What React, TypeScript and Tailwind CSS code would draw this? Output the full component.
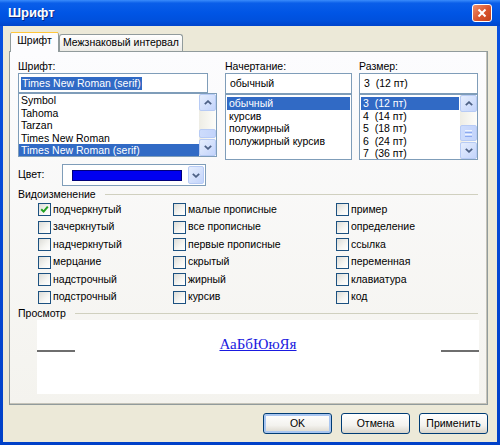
import React from 'react';

type Dir = 'up' | 'down';

const Chevron: React.FC<{ dir: Dir }> = ({ dir }) => (
  <svg width="8" height="5" viewBox="0 0 8 5">
    <path
      d={dir === 'up' ? 'M0.8 4.2 L4 1.2 L7.2 4.2' : 'M0.8 0.8 L4 3.8 L7.2 0.8'}
      stroke="#4d6185"
      strokeWidth="1.8"
      fill="none"
    />
  </svg>
);

const ScrollBtn: React.FC<{ dir: Dir }> = ({ dir }) => (
  <div className="h-[17px] w-[17px] shrink-0 rounded-[2px] border border-[#b7cbf5] bg-[linear-gradient(135deg,#e6eefd,#c3d4fb)] flex items-center justify-center">
    <Chevron dir={dir} />
  </div>
);

const Scrollbar: React.FC<{ thumb: number }> = ({ thumb }) => (
  <div className="w-[17px] flex flex-col bg-[linear-gradient(90deg,#eeede5,#fdfdfa)]">
    <ScrollBtn dir="up" />
    <div className="flex-1 flex flex-col justify-end pb-[1px]">
      <div
        className="w-[17px] rounded-[2px] border border-[#b7cbf5] bg-[linear-gradient(90deg,#cddcfc,#c3d4fb)] flex flex-col items-center justify-center gap-[1px]"
        style={{ height: thumb }}
      >
        {thumb > 12 && (
          <>
            <div className="w-[7px] h-px bg-[#eef4fe]" />
            <div className="w-[7px] h-px bg-[#8caaf0]" />
            <div className="w-[7px] h-px bg-[#eef4fe]" />
            <div className="w-[7px] h-px bg-[#8caaf0]" />
          </>
        )}
      </div>
    </div>
    <ScrollBtn dir="down" />
  </div>
);

const Item: React.FC<{ text: string; sel?: boolean }> = ({ text, sel }) => (
  <div
    className={`h-[12.5px] leading-[12.5px] pl-[2px] whitespace-pre ${
      sel ? 'bg-[#316ac5] text-white' : ''
    }`}
  >
    {text}
  </div>
);

const Check: React.FC<{ label: string; checked?: boolean }> = ({ label, checked }) => (
  <div className="h-[17.5px] flex items-center gap-[2px]">
    <span className="w-[13px] h-[13px] shrink-0 border border-[#1c5180] bg-[linear-gradient(135deg,#dcdcd7,#f6f6f3_60%,#ffffff)] flex items-center justify-center">
      {checked && (
        <svg width="9" height="9" viewBox="0 0 9 9">
          <path d="M1.2 4.2 L3.6 6.6 L7.8 1.6" stroke="#21a121" strokeWidth="2" fill="none" />
        </svg>
      )}
    </span>
    <span className="whitespace-nowrap">{label}</span>
  </div>
);

const XpButton: React.FC<{ text: string; def?: boolean }> = ({ text, def }) => (
  <div
    className={`w-[69px] h-[21px] rounded-[3px] border border-[#003c74] bg-[linear-gradient(180deg,#ffffff,#f3f2ee_60%,#d9d5cb)] flex items-center justify-center ${
      def ? 'shadow-[inset_0_0_0_2px_#a9c6f1]' : ''
    }`}
  >
    {text}
  </div>
);

const App: React.FC = () => {
  return (
    <div className="w-[500px] h-[445px] flex flex-col font-['Liberation_Sans',Arial,sans-serif] text-[10.5px] text-black">
      {/* Title bar */}
      <div className="h-[26px] shrink-0 flex items-center pl-[8px] pr-[8px] bg-[linear-gradient(180deg,#3a8cfb_0%,#0a5ee9_12%,#0055e5_50%,#0050dc_80%,#0045cc_100%)]">
        <span className="text-white font-bold text-[13px] [text-shadow:1px_1px_0_#0a2a8a]">Шрифт</span>
        <div className="flex-1" />
        <div className="w-[20px] h-[18px] rounded-[3px] border border-white bg-[linear-gradient(135deg,#f0906c,#d9542d_55%,#c2411b)] flex items-center justify-center">
          <svg width="10" height="10" viewBox="0 0 10 10">
            <path d="M1.5 1.5 L8.5 8.5 M8.5 1.5 L1.5 8.5" stroke="white" strokeWidth="2" />
          </svg>
        </div>
      </div>

      {/* Window frame */}
      <div className="flex-1 flex bg-[linear-gradient(180deg,#0851e0,#0040c8)] pl-[3px] pr-[4px] pb-[3px]">
        <div className="flex-1 bg-[#ece9d8] flex flex-col pl-[6px] pr-[9px] pt-[6px]">
          {/* Tabs */}
          <div className="h-[19px] flex items-end pl-[1px]">
            <div className="relative z-10 w-[49px] h-[20px] -mb-px rounded-t-[3px] border-x border-[#919b9c] bg-[#fcfcfe] flex flex-col">
              <div className="h-px bg-[#e68b2c] rounded-t-[3px]" />
              <div className="h-[2px] bg-[#ffc73c]" />
              <div className="flex-1 flex items-center justify-center pb-[3px]">Шрифт</div>
            </div>
            <div className="w-[124px] h-[17px] rounded-t-[3px] border border-b-0 border-[#919b9c] bg-[linear-gradient(180deg,#ffffff,#ecebe6)] flex items-center justify-center">
              Межзнаковый интервал
            </div>
          </div>

          {/* Panel */}
          <div className="h-[354px] border border-[#919b9c] shadow-[inset_-1px_-1px_0_#c5c3b8] bg-[linear-gradient(180deg,#fcfcfe,#f4f3ee)] pl-[8px] pr-[8px] pt-[9px]">
            {/* three lists */}
            <div className="flex">
              <div className="w-[199px] flex flex-col">
                <div className="h-[12px] leading-[11px]">Шрифт:</div>
                <div className="w-[190px] h-[20px] border border-[#7f9db9] bg-white flex items-center pl-[2px]">
                  <span className="bg-[#316ac5] text-white px-px leading-[13px]">Times New Roman (serif)</span>
                </div>
                <div className="h-[64px] border border-[#7f9db9] bg-white flex">
                  <div className="flex-1 overflow-hidden">
                    <Item text="Symbol" />
                    <Item text="Tahoma" />
                    <Item text="Tarzan" />
                    <Item text="Times New Roman" />
                    <Item text="Times New Roman (serif)" sel />
                  </div>
                  <Scrollbar thumb={9} />
                </div>
              </div>

              <div className="w-[127px] ml-[8px] flex flex-col">
                <div className="h-[12px] leading-[11px]">Начертание:</div>
                <div className="h-[21px] border border-[#7f9db9] bg-white flex items-center pl-[4px]">обычный</div>
                <div className="h-[66px] border border-[#7f9db9] bg-white pt-[2px] px-px">
                  <Item text="обычный" sel />
                  <Item text="курсив" />
                  <Item text="полужирный" />
                  <Item text="полужирный курсив" />
                </div>
              </div>

              <div className="w-[119px] ml-[7px] flex flex-col">
                <div className="h-[12px] leading-[11px]">Размер:</div>
                <div className="h-[21px] border border-[#7f9db9] bg-white flex items-center pl-[4px] whitespace-pre">3  (12 пт)</div>
                <div className="h-[66px] border border-[#7f9db9] bg-white flex">
                  <div className="flex-1 pt-[2px] px-px overflow-hidden">
                    <Item text="3  (12 пт)" sel />
                    <Item text="4  (14 пт)" />
                    <Item text="5  (18 пт)" />
                    <Item text="6  (24 пт)" />
                    <Item text="7  (36 пт)" />
                  </div>
                  <Scrollbar thumb={16} />
                </div>
              </div>
            </div>

            {/* Colour */}
            <div className="flex items-center mt-[4px]">
              <span className="w-[44px]">Цвет:</span>
              <div className="w-[144px] h-[22px] border border-[#7f9db9] bg-white flex items-center pl-[9px] pr-px">
                <div className="w-[110px] h-[11px] bg-[#0000f0] border border-[#00007a]" />
                <div className="flex-1" />
                <div className="w-[16px] h-[18px] rounded-[2px] border border-[#b7cbf5] bg-[linear-gradient(135deg,#e6eefd,#c3d4fb)] flex items-center justify-center">
                  <Chevron dir="down" />
                </div>
              </div>
            </div>

            {/* Effects */}
            <div className="flex items-center mt-[2px] h-[13px]">
              <span>Видоизменение</span>
              <div className="flex-1 h-px bg-[#d0d0bf] ml-[9px] mr-px" />
            </div>
            <div className="grid grid-cols-[135px_163px_1fr] pl-[20px]">
              <Check label="подчеркнутый" checked />
              <Check label="малые прописные" />
              <Check label="пример" />
              <Check label="зачеркнутый" />
              <Check label="все прописные" />
              <Check label="определение" />
              <Check label="надчеркнутый" />
              <Check label="первые прописные" />
              <Check label="ссылка" />
              <Check label="мерцание" />
              <Check label="скрытый" />
              <Check label="переменная" />
              <Check label="надстрочный" />
              <Check label="жирный" />
              <Check label="клавиатура" />
              <Check label="подстрочный" />
              <Check label="курсив" />
              <Check label="код" />
            </div>

            {/* Preview */}
            <div className="flex items-center mt-[1px] h-[13px]">
              <span>Просмотр</span>
              <div className="flex-1 h-px bg-[#d0d0bf] ml-[9px] mr-px" />
            </div>
            <div className="ml-[19px] w-[442px] h-[74px] bg-white flex items-start pt-[16px]">
              <div className="w-[38px] h-[2px] mt-[14px] bg-[#6e6e6e]" />
              <div className="flex-1 text-center">
                <span className="font-['Liberation_Serif','Times_New_Roman',serif] text-[15px] leading-[17px] text-[#1a1ae0] underline">
                  АаБбЮюЯя
                </span>
              </div>
              <div className="w-[38px] h-[2px] mt-[14px] bg-[#6e6e6e]" />
            </div>
          </div>

          {/* Buttons */}
          <div className="flex justify-end gap-[9px] mt-[8px]">
            <XpButton text="OK" def />
            <XpButton text="Отмена" />
            <XpButton text="Применить" />
          </div>
        </div>
      </div>
    </div>
  );
};

export default App;
